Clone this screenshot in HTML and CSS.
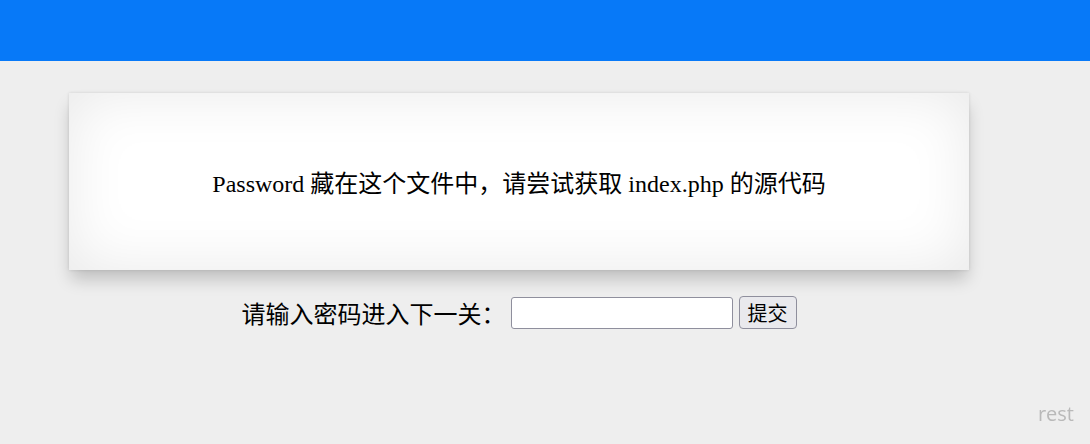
FILE: index.html
```html
<!DOCTYPE html>
<html lang="zh-CN">
<head>
    <meta charset="UTF-8">
    <meta name="viewport" content="width=device-width, initial-scale=1.0">
    <title>Level</title>
    <link rel="stylesheet" href="styles.css">
</head>
<body>

<div class="topbar"></div>

<div class="main">
    <div class="card">
        <p>Password 藏在这个文件中，请尝试获取 index.php 的源代码</p>
    </div>

    <form class="pass-form" method="post" action="">
        <label for="pwd">请输入密码进入下一关：</label>
        <input type="text" id="pwd" name="pwd">
        <button type="submit">提交</button>
    </form>
</div>

<div class="rest">rest</div>

</body>
</html>
```

FILE: styles.css
```css
body {
    margin: 0;
    background-color: #eeeeee;
    font-family: "Liberation Serif", "Noto Sans CJK SC", serif;
    color: #000;
}

.topbar {
    height: 61px;
    background-color: #0779f8;
}

.main {
    width: 900px;
    margin-left: 69px;
    padding-top: 32px;
}

.card {
    height: 177px;
    display: flex;
    align-items: center;
    justify-content: center;
    background-color: #fff;
    box-shadow: inset 0 0 60px rgba(0, 0, 0, 0.09),
                0 0 3px rgba(0, 0, 0, 0.12),
                0 11px 16px -2px rgba(0, 0, 0, 0.2);
}

.card p {
    margin: 0;
    font-size: 24px;
}

.pass-form {
    display: flex;
    align-items: center;
    justify-content: center;
    margin-top: 25px;
    font-size: 24px;
}

.pass-form label {
    margin-right: 5px;
}

.pass-form input {
    width: 222px;
    height: 32px;
    box-sizing: border-box;
    font-size: 18px;
    border: 1px solid #8f8f9d;
    border-radius: 3px;
    background: #fff;
}

.pass-form button {
    margin-left: 6px;
    height: 33px;
    padding: 0 8px;
    font-family: "Liberation Serif", "Noto Sans CJK SC", serif;
    font-size: 20px;
    border: 1px solid #8f8f9d;
    border-radius: 4px;
    background-color: #e9e9ed;
}

.rest {
    position: fixed;
    right: 16px;
    bottom: 17px;
    font-family: "Open Sans", sans-serif;
    font-size: 20px;
    color: #b9b9b9;
}
```
